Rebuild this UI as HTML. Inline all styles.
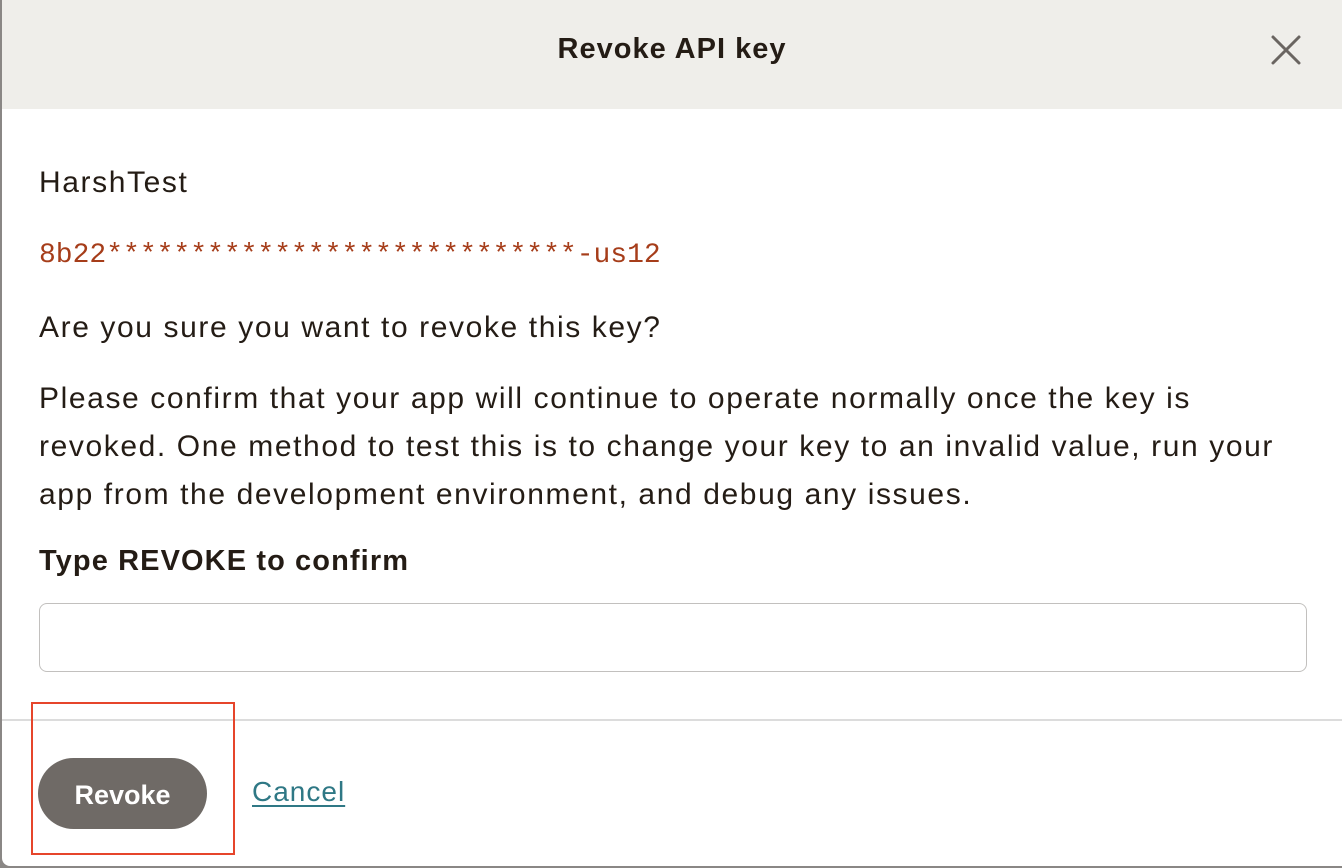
<!DOCTYPE html>
<html><head><meta charset="utf-8"><style>
html,body{margin:0;padding:0;width:1342px;height:868px;overflow:hidden;background:#8a8785;font-family:"Liberation Sans",sans-serif;color:#241c15}
.modal{position:absolute;left:2px;top:0;width:1340px;height:866px;background:#fff;border-bottom-left-radius:8px;overflow:hidden}
.hdr{position:absolute;left:0;top:0;width:1340px;height:109px;background:#efeeea}
.title{position:absolute;left:0;width:1340px;top:31px;text-align:center;font-size:29px;font-weight:bold;line-height:36px;letter-spacing:1px}
.x{position:absolute;left:1266px;top:34px}
.t{position:absolute;left:37px;font-size:30px;line-height:48px;white-space:nowrap;letter-spacing:1.6px}
.mono{position:absolute;left:37px;top:239px;font-family:"Liberation Mono",monospace;font-size:28px;color:#a63d1a;line-height:34px}
.inp{position:absolute;left:37px;top:603px;width:1266px;height:67px;border:1px solid #c2c0be;border-radius:8px}
.div{position:absolute;left:0;top:719px;width:1340px;height:2px;background:#dcdcdc}
.btn{position:absolute;left:36px;top:758px;width:169px;height:71px;border-radius:36px;background:#6f6a66;color:#fff;font-size:27px;font-weight:bold;text-align:center;line-height:75px}
.cancel{position:absolute;left:250px;top:774px;font-size:28px;color:#2f7885;text-decoration:underline;text-underline-offset:4px;line-height:36px;letter-spacing:1px}
.red{position:absolute;left:29px;top:702px;width:200px;height:149px;border:2px solid #e6452b}
</style></head><body>
<div class="modal">
<div class="hdr"><div class="title">Revoke API key</div>
<svg class="x" width="36" height="34" viewBox="0 0 36 34"><path d="M5 3L31 29M31 3L5 29" stroke="#6a6561" stroke-width="3" stroke-linecap="round"/></svg></div>
<div class="t" style="top:159px">HarshTest</div>
<div class="mono">8b22****************************-us12</div>
<div class="t" style="top:304px">Are you sure you want to revoke this key?</div>
<div class="t" style="top:375px">Please confirm that your app will continue to operate normally once the key is<br>revoked. One method to test this is to change your key to an invalid value, run your<br>app from the development environment, and debug any issues.</div>
<div class="t" style="top:537px;font-weight:bold;font-size:29px;letter-spacing:1.1px">Type REVOKE to confirm</div>
<div class="inp"></div>
<div class="div"></div>
<div class="btn">Revoke</div>
<div class="cancel">Cancel</div>
<div class="red"></div>
</div>
</body></html>
